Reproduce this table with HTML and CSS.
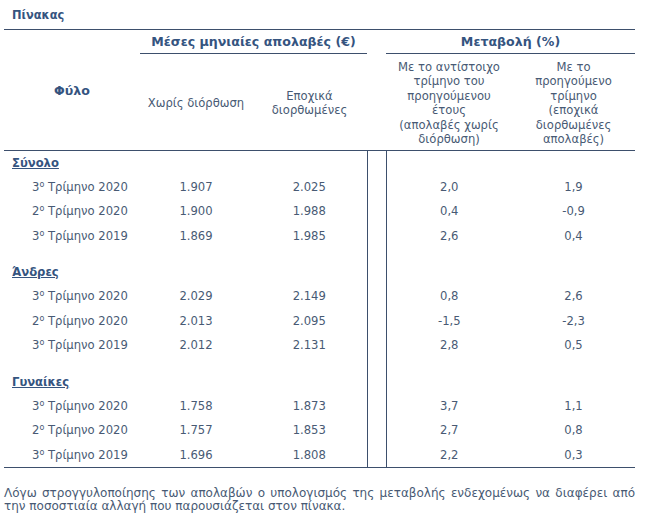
FILE: index.html
```html
<!DOCTYPE html>
<html lang="el">
<head>
<meta charset="utf-8">
<link rel="stylesheet" href="styles.css">
</head>
<body>
<div class="wrap">
  <div class="title">Πίνακας</div>
  <table class="tbl">
    <colgroup>
      <col class="c1"><col class="c2"><col class="c3"><col class="cs"><col class="c4"><col class="c5">
    </colgroup>
    <thead>
      <tr class="h1">
        <th rowspan="2" class="fylo">Φύλο</th>
        <th colspan="2" class="grp">Μέσες μηνιαίες απολαβές (€)</th>
        <th class="sp"></th>
        <th colspan="2" class="grp">Μεταβολή (%)</th>
      </tr>
      <tr class="h2">
        <td>Χωρίς διόρθωση</td>
        <td>Εποχικά<br>διορθωμένες</td>
        <td class="sp"></td>
        <td>Με το αντίστοιχο<br>τρίμηνο του<br>προηγούμενου<br>έτους<br>(απολαβές χωρίς<br>διόρθωση)</td>
        <td>Με το<br>προηγούμενο<br>τρίμηνο<br>(εποχικά<br>διορθωμένες<br>απολαβές)</td>
      </tr>
    </thead>
    <tbody>
      <tr class="sec"><td class="lab"><span>Σύνολο</span></td><td></td><td></td><td class="spv"></td><td></td><td></td></tr>
      <tr class="row"><td class="q">3<sup>ο</sup> Τρίμηνο 2020</td><td>1.907</td><td>2.025</td><td class="spv"></td><td>2,0</td><td>1,9</td></tr>
      <tr class="row"><td class="q">2<sup>ο</sup> Τρίμηνο 2020</td><td>1.900</td><td>1.988</td><td class="spv"></td><td>0,4</td><td>-0,9</td></tr>
      <tr class="row"><td class="q">3<sup>ο</sup> Τρίμηνο 2019</td><td>1.869</td><td>1.985</td><td class="spv"></td><td>2,6</td><td>0,4</td></tr>
      <tr class="gap"><td></td><td></td><td></td><td class="spv"></td><td></td><td></td></tr>
      <tr class="sec"><td class="lab"><span>Άνδρες</span></td><td></td><td></td><td class="spv"></td><td></td><td></td></tr>
      <tr class="row"><td class="q">3<sup>ο</sup> Τρίμηνο 2020</td><td>2.029</td><td>2.149</td><td class="spv"></td><td>0,8</td><td>2,6</td></tr>
      <tr class="row"><td class="q">2<sup>ο</sup> Τρίμηνο 2020</td><td>2.013</td><td>2.095</td><td class="spv"></td><td>-1,5</td><td>-2,3</td></tr>
      <tr class="row"><td class="q">3<sup>ο</sup> Τρίμηνο 2019</td><td>2.012</td><td>2.131</td><td class="spv"></td><td>2,8</td><td>0,5</td></tr>
      <tr class="gap"><td></td><td></td><td></td><td class="spv"></td><td></td><td></td></tr>
      <tr class="sec"><td class="lab"><span>Γυναίκες</span></td><td></td><td></td><td class="spv"></td><td></td><td></td></tr>
      <tr class="row"><td class="q">3<sup>ο</sup> Τρίμηνο 2020</td><td>1.758</td><td>1.873</td><td class="spv"></td><td>3,7</td><td>1,1</td></tr>
      <tr class="row"><td class="q">2<sup>ο</sup> Τρίμηνο 2020</td><td>1.757</td><td>1.853</td><td class="spv"></td><td>2,7</td><td>0,8</td></tr>
      <tr class="row last"><td class="q">3<sup>ο</sup> Τρίμηνο 2019</td><td>1.696</td><td>1.808</td><td class="spv"></td><td>2,2</td><td>0,3</td></tr>
    </tbody>
  </table>
  <p class="note">Λόγω στρογγυλοποίησης των απολαβών ο υπολογισμός της μεταβολής ενδεχομένως να διαφέρει από την ποσοστιαία αλλαγή που παρουσιάζεται στον πίνακα.</p>
</div>
</body>
</html>
```
FILE: styles.css
```css
html, body {
  margin: 0;
  padding: 0;
  background: #ffffff;
}
body {
  font-family: "DejaVu Sans", Verdana, sans-serif;
  font-size: 11.6px;
  color: #485a74;
}
.wrap {
  width: 631px;
  padding: 7px 0 0 4px;
}
.title {
  font-weight: bold;
  font-size: 11.4px;
  color: #35547f;
  padding-left: 8px;
  height: 22px;
  line-height: 16px;
}
.tbl {
  border-collapse: collapse;
  width: 631px;
  table-layout: fixed;
  border-top: 1px solid #3d4f6c;
}
.c1 { width: 136px; }
.c2 { width: 112px; }
.c3 { width: 115px; }
.cs { width: 19px; }
.c4 { width: 126px; }
.c5 { width: 123px; }
.tbl th, .tbl td {
  padding: 0;
  text-align: center;
  vertical-align: middle;
}
.h1 { height: 24px; }
.grp {
  font-weight: bold;
  font-size: 12.6px;
  color: #35547f;
  border-bottom: 1px solid #3d4f6c;
}
.fylo {
  font-weight: bold;
  font-size: 12.6px;
  color: #35547f;
  border-bottom: 1px solid #3d4f6c;
}
.h2 { height: 97px; }
.h2 td {
  line-height: 14.5px;
  padding-top: 2px;
}
thead tr.h2 {
  border-bottom: 1px solid #3d4f6c;
}
.spv {
  border-left: 1px solid #3d4f6c;
  border-right: 1px solid #3d4f6c;
}
.sec { height: 24px; }
.sec .lab {
  text-align: left;
  padding-left: 8px;
  font-weight: bold;
  color: #35547f;
}
.sec .lab span { text-decoration: underline; }
.row { height: 24.5px; }
.gap { height: 12px; }
.row .q {
  text-align: left;
  padding-left: 28px;
}
.q sup {
  font-size: 8px;
  vertical-align: 4px;
  line-height: 0;
}
.last td { border-bottom: 1px solid #3d4f6c; }
.note {
  margin: 19px 0 0 0;
  font-size: 12px;
  text-align: justify;
  line-height: 13px;
}
```
